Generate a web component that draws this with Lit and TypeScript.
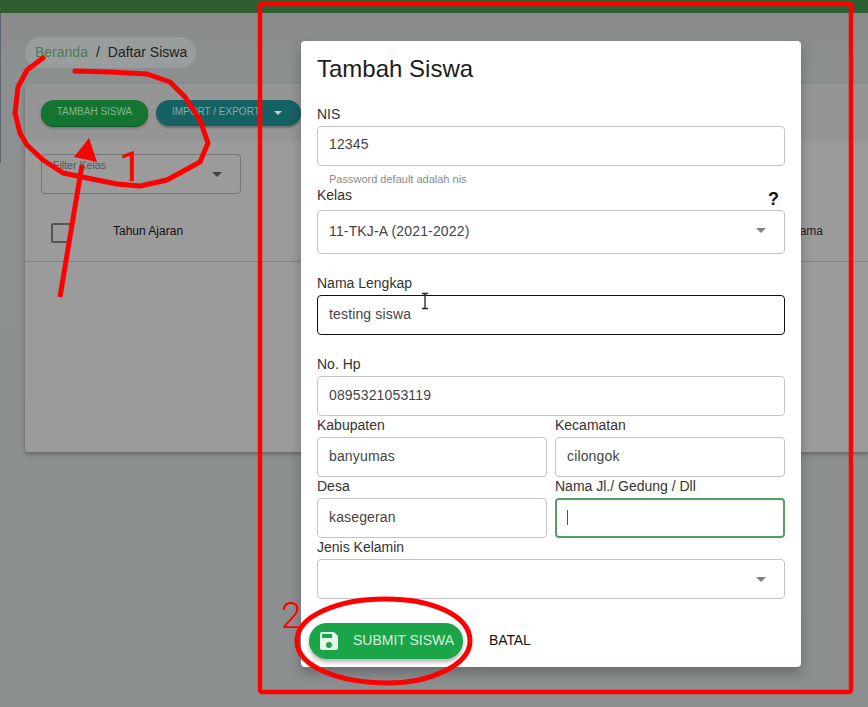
import { LitElement, html, css, svg } from "lit";
import { customElement } from "lit/decorators.js";

const SAVE = "M15,9H5V5H15M12,19A3,3 0 0,1 9,16A3,3 0 0,1 12,13A3,3 0 0,1 15,16A3,3 0 0,1 12,19M17,3H5C3.89,3 3,3.9 3,5V19A2,2 0 0,0 5,21H19A2,2 0 0,0 21,19V7L17,3Z";

@customElement("app-root")
export class AppRoot extends LitElement {
  static styles = css`
    :host { display: block; position: relative; width: 868px; height: 707px; overflow: hidden;
      font-family: "Liberation Sans", Arial, sans-serif; color: #222;
      background: linear-gradient(#8a8b8b, #8c9090 12%, #8c8f8f); }
    .topbar { height: 13px; background: #2e5f30; }
    .strip { position: absolute; left: 0; top: 13px; width: 1px; height: 150px; background: #5b6672; }
    .page { padding: 24px 0 0 25px; }
    .crumbs { display: inline-flex; align-items: center; height: 31px; box-sizing: border-box; padding: 0 9px 2px 10px; border-radius: 16px;
      background: #9a9d9d; font-size: 14px; }
    .crumbs a { color: #4f7a55; }
    .crumbs i { font-style: normal; margin: 0 8px; }
    .card { margin-top: 16px; height: 368px; background: #9b9b9b; border-radius: 4px 0 0 4px;
      box-shadow: 0 2px 4px rgba(0,0,0,.3); }
    .actions { height: 57px; box-sizing: border-box; padding: 16px; display: flex; gap: 8px; background: #959595;
      border-radius: 4px 0 0 0; }
    .pill { height: 26px; box-sizing: border-box; border-radius: 13px; display: flex; align-items: center;
      font-size: 10px; padding-bottom: 3px; }
    .green { width: 107px; justify-content: center; background: #147533; color: #7fb893; box-shadow: 0 1px 0 #0f5c28, 0 2px 3px rgba(0,0,0,.3); }
    .teal { width: 145px; padding-left: 16px; background: #166163; color: #7fb0b2; gap: 14px; box-shadow: 0 2px 2px rgba(0,0,0,.25); }
    .teal .tri { border-width: 4px 4px 0; color: #b9cfcf; margin-top: 3px; }
    .tri { width: 0; height: 0; border-left: 5px solid transparent; border-right: 5px solid transparent;
      border-top: 5px solid currentColor; }
    .filter { position: relative; margin: 13px 0 0 16px; width: 200px; height: 40px; box-sizing: border-box;
      border: 1px solid #777; border-radius: 4px; }
    .filter span { position: absolute; left: 11px; top: 4px; font-size: 10.6px; color: #555; }
    .filter .tri { position: absolute; right: 18px; top: 17px; color: #444; }
    .thead { display: flex; align-items: center; height: 68px; box-sizing: border-box; padding-top: 11px; border-bottom: 1px solid #818181; }
    .check { width: 16px; height: 16px; margin-left: 26px; border: 2px solid #555; border-radius: 2px; }
    .thead span { font-size: 12px; margin: 0 0 4px 42px; color: #111; }
    .thead .nama { margin-left: auto; margin-right: 45px; color: #222; }
    .dialog { position: absolute; left: 301px; top: 41px; width: 500px; height: 626px; box-sizing: border-box;
      padding: 12px 16px 8px; background: #fff; border-radius: 4px;
      box-shadow: 0 6px 12px rgba(0,0,0,.25); }
    h1 { margin: 0 0 20px; font-size: 24px; font-weight: 400; line-height: 32px; color: #1c1c1c; }
    .lab { display: block; font-size: 14px; line-height: 19px; padding-bottom: 2px; color: #333; }
    .mt20 { margin-top: 20px; }
    .field { display: flex; align-items: center; justify-content: space-between; height: 40px; box-sizing: border-box;
      padding: 0 11px 2px; border: 1px solid #c4c4c4; border-radius: 4px; font-size: 14px; letter-spacing: .15px; color: #444; }
    .tall { height: 44px; }
    .nis { padding-bottom: 4px; }
    .field .tri { color: #808080; margin: 2px 7px 0 0; }
    .tall .tri { margin: 0 7px 2px 0; }
    .black { border-color: #111; }
    .focus { border: 2px solid #559f60; padding: 0 10px 1px; }
    .caret { width: 1px; height: 15px; background: #555; }
    .hint { font-size: 11px; line-height: 13px; color: #8a8a8a; padding: 7px 0 3px 12px; }
    .kelas-row { display: flex; justify-content: space-between; align-items: flex-end; height: 21px; }
    .kelas-row .lab { padding-bottom: 5px; }
    .q { font-size: 18px; font-weight: 700; line-height: 21px; color: #111; margin-right: 6px; }
    .two { display: grid; grid-template-columns: 230px 230px; gap: 0 8px; }
    .foot { display: flex; align-items: center; margin: 24px 0 0 -8px; font-size: 14px; }
    .submit { display: flex; align-items: center; height: 36px; width: 154px; box-sizing: border-box; padding-left: 8px;
      border-radius: 18px; background: #1aa549; color: #d9f0df;
      box-shadow: 0 3px 4px rgba(0,0,0,.3); }
    .submit svg { width: 24px; height: 24px; fill: #e6f5ea; margin-right: 12px; flex: none; }
    .submit span { padding-bottom: 2px; }
    .batal { margin-left: 26px; padding-bottom: 2px; letter-spacing: -.1px; color: #111; }
    .marks { position: absolute; inset: 0; width: 868px; height: 707px; pointer-events: none; }
    .marks text { font-family: Roboto, "Liberation Sans", sans-serif; font-weight: 300; fill: #f00; }
    .marks .one { font-weight: 400; }
  `;

  private input(label: string, value: string, cls = "") {
    return html`<div><span class="lab">${label}</span><div class="field ${cls}">${value}</div></div>`;
  }

  render() {
    return html`
      <div class="topbar"></div>
      <div class="strip"></div>
      <div class="page">
        <nav class="crumbs"><a>Beranda</a><i>/</i><span>Daftar Siswa</span></nav>
        <section class="card">
          <div class="actions">
            <div class="pill green">TAMBAH SISWA</div>
            <div class="pill teal">IMPORT / EXPORT<span class="tri"></span></div>
          </div>
          <div class="filter"><span>Filter Kelas</span><div class="tri"></div></div>
          <div class="thead"><div class="check"></div><span>Tahun Ajaran</span><span class="nama">Nama</span></div>
        </section>
      </div>
      <div class="dialog">
        <h1>Tambah Siswa</h1>
        <span class="lab">NIS</span>
        <div class="field nis">12345</div>
        <div class="hint">Password default adalah nis</div>
        <div class="kelas-row"><span class="lab">Kelas</span><span class="q">?</span></div>
        <div class="field tall">11-TKJ-A (2021-2022)<span class="tri"></span></div>
        <div class="mt20">${this.input("Nama Lengkap", "testing siswa", "black")}</div>
        <div class="mt20">${this.input("No. Hp", "0895321053119")}</div>
        <div class="two">
          ${this.input("Kabupaten", "banyumas")}
          ${this.input("Kecamatan", "cilongok")}
          ${this.input("Desa", "kasegeran")}
          <div><span class="lab">Nama Jl./ Gedung / Dll</span><div class="field focus"><span class="caret"></span></div></div>
        </div>
        <span class="lab">Jenis Kelamin</span>
        <div class="field"><span></span><span class="tri"></span></div>
        <div class="foot">
          <div class="submit"><svg viewBox="0 0 24 24"><path d="${SAVE}"></path></svg><span>SUBMIT SISWA</span></div>
          <div class="batal">BATAL</div>
        </div>
      </div>
      <svg class="marks" viewBox="0 0 868 707">
        ${svg`
          <rect x="260" y="4" width="591" height="688" rx="2" fill="none" stroke="#f00" stroke-width="4.5"></rect>
          <path d="M43 58 L27 70 L18 87 L15 113 L20 133 L27 145 L43 160 L63 173 L87 178 L117 184 L140 186 L167 180 L200 162 L208 143 L200 120 L185 97 L170 82 L147 74 L110 72 L75 71"
            fill="none" stroke="#f00" stroke-width="5" stroke-linejoin="round" stroke-linecap="round"></path>
          <path d="M60 297 L82 165" fill="none" stroke="#f00" stroke-width="5"></path>
          <path d="M89 138 L74 157 L97 162 Z" fill="#f00"></path>
          <text class="one" x="119" y="181" font-size="42">1</text>
          <text x="281" y="628" font-size="37">2</text>
          <path d="M297 641 C297 615 340 599 385 599 C432 599 470 615 470 641 C470 665 430 683 388 683 C340 683 297 667 297 641 Z"
            fill="none" stroke="#f00" stroke-width="5"></path>
          <path d="M422 293.500 H428 M425 294 V308 M422 308.500 H428" fill="none" stroke="#222" stroke-width="1.300"></path>
        `}
      </svg>
    `;
  }
}
